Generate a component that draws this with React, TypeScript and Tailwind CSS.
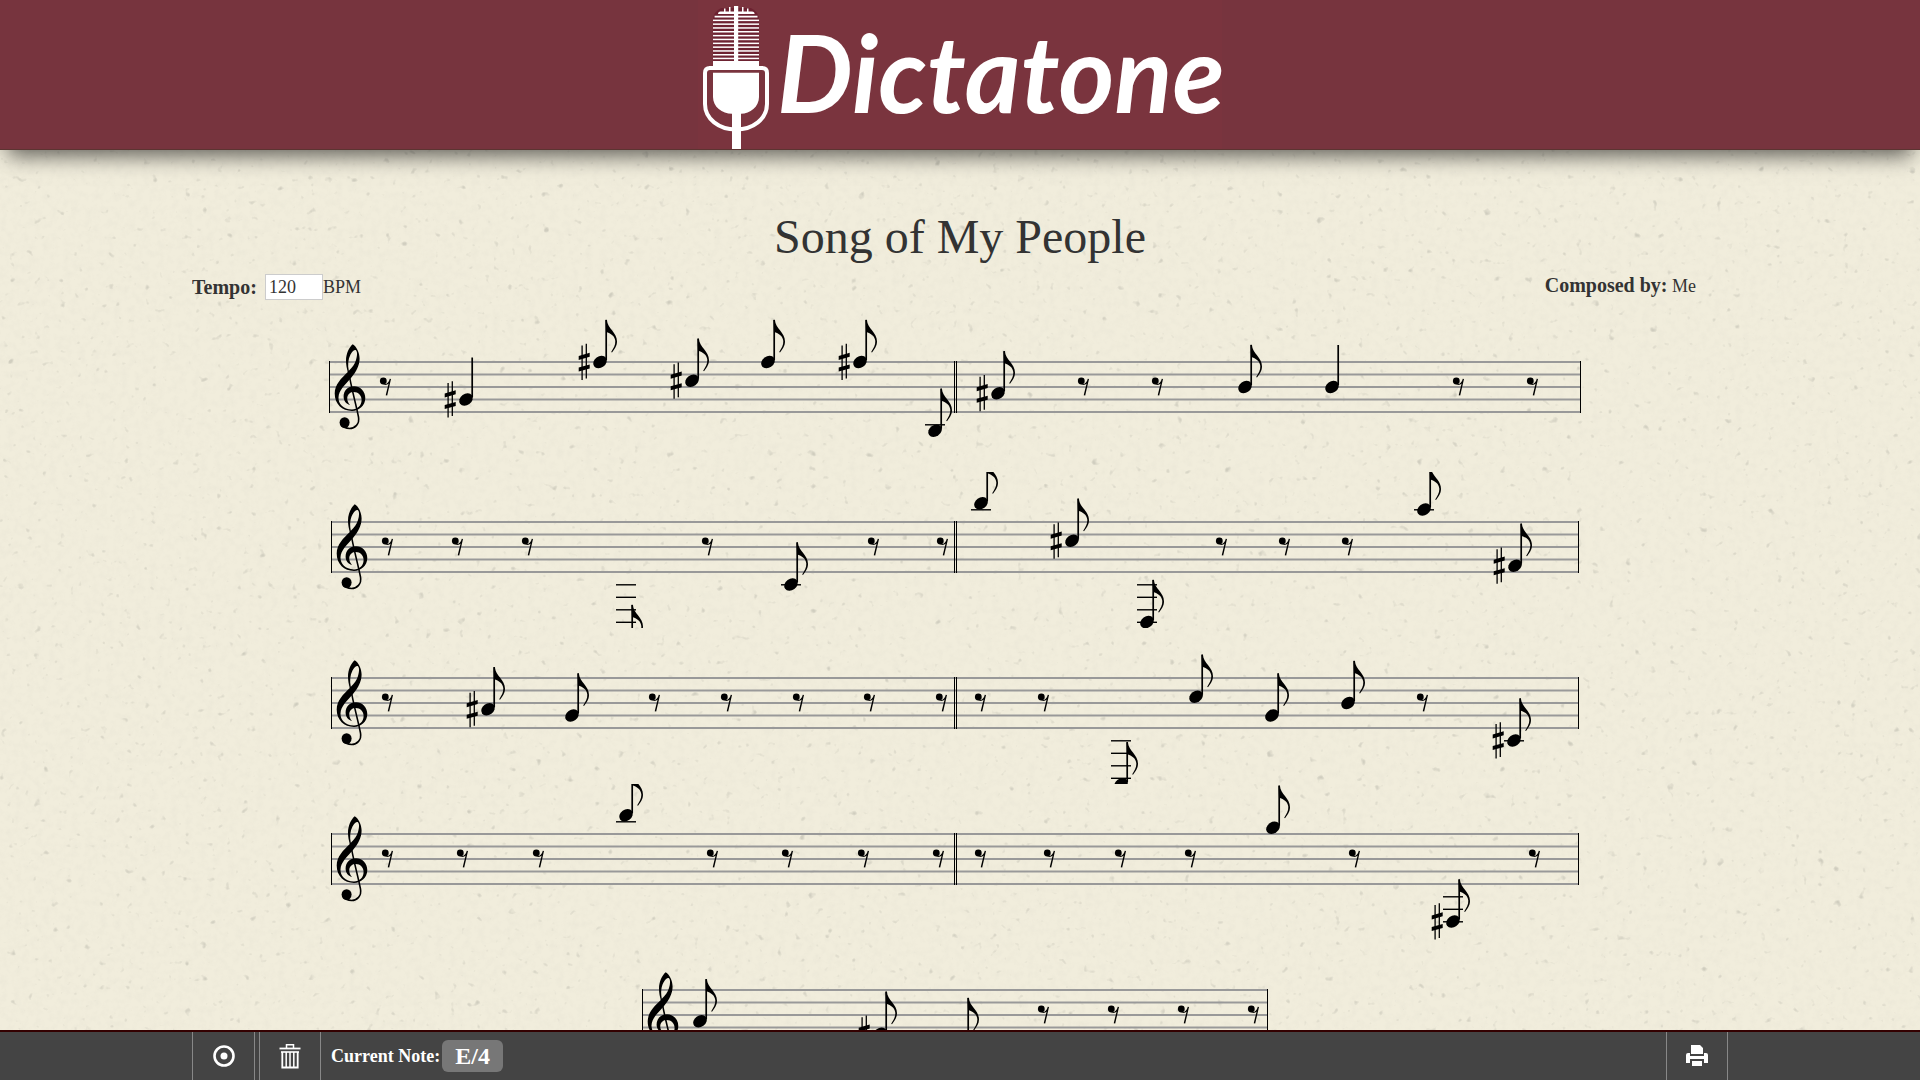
import React from "react";

type NoteItem = { kind: "note"; x: number; step: number; sharp?: boolean; quarter?: boolean };
type RestItem = { kind: "rest"; x: number };
type Item = NoteItem | RestItem;
type Measure = { clef?: boolean; items: Item[] };

const r = (x: number): RestItem => ({ kind: "rest", x });
const n = (x: number, step: number): NoteItem => ({ kind: "note", x, step });
const s = (x: number, step: number): NoteItem => ({ kind: "note", x, step, sharp: true });

const ROWS: { wide?: boolean; measures: Measure[] }[] = [
  {
    wide: true,
    measures: [
      {
        clef: true,
        items: [r(51), { ...s(137, 6), quarter: true }, s(271, 0), s(363, 3), n(439, 0), s(531, 0), n(606, 11)],
      },
      { items: [s(43, 5), r(123), r(197), n(290, 4), { ...n(377, 4), quarter: true }, r(498), r(572)] },
    ],
  },
  {
    measures: [
      { clef: true, items: [r(51), r(121), r(191), n(295, 20), r(371), n(460, 10), r(537), r(606)] },
      { items: [n(26, -3), s(117, 3), n(192, 16), r(261), r(324), r(387), n(469, -2), s(560, 7)] },
    ],
  },
  {
    measures: [
      { clef: true, items: [r(51), s(157, 5), n(241, 6), r(318), r(390), r(462), r(533), r(605)] },
      { items: [r(20), r(83), n(166, 17), n(241, 3), n(317, 6), n(393, 4), r(462), s(559, 10)] },
    ],
  },
  {
    measures: [
      { clef: true, items: [r(51), r(126), r(202), n(295, -3), r(376), r(451), r(527), r(602)] },
      { items: [r(20), r(89), r(160), r(230), n(318, -1), r(394), s(498, 14), r(574)] },
    ],
  },
  { wide: true, measures: [{ clef: true, items: [n(58, 5), s(238, 7), n(320, 8), r(396), r(466), r(536), r(606)] }] },
];

const TOP = 50;
const STEP = 6.25;

function Clef() {
  return (
    <g>
      <path
        fillRule="evenodd"
        d="M23 48.9C30 48.9 36.3 43.5 36.3 36C36.3 29 31 24.3 25 24.3C18.5 24.3 14.6 29 14.6 34.5C14.6 38.5 17 42 21 43C18.8 40.5 18 38 18.3 35.5C18.7 32 21.5 30 24.8 30C29.2 30 32.6 33.5 32.6 38C32.6 43.5 28.5 47.4 23 47.4C14 47.4 9.3 41.5 9.5 35.5C9.8 28 16 23 22 16C27.5 9.5 30.6 3 30.6 -3.5C30.6 -9.5 27.5 -15.5 23.7 -17.7C20 -14.5 17 -8 17 -1.5C17 2.5 17.8 6.5 18.8 10C12.5 16 5.7 22.5 5.7 31.5C5.7 42 13 48.9 23 48.9ZM19.8 8.8C18.6 3 19 -3 21.5 -7.5C23 -10.5 25 -12.3 26.7 -12C28.7 -10.5 28.2 -6 27 -2C25.8 2 23.3 5.5 19.8 8.8Z"
      />
      <path d="M19.5 9C22 25 27 42 29.5 55C30.8 62 26 66.5 20.5 66.5C17 66.5 14 64.5 12.5 62" fill="none" stroke="black" strokeWidth="1.6" />
      <ellipse cx="15.6" cy="60.6" rx="5" ry="5.4" />
    </g>
  );
}

function Rest({ x }: { x: number }) {
  return (
    <g transform={`translate(${x} 15.5)`}>
      <circle cx="3.3" cy="3.5" r="3.4" />
      <path d="M3 6.7C6.500 7.200 9 5 9.8 1.200L11 1.400L7.200 18L5.700 17.800L8.600 6C7.500 7.400 5 7.900 3 6.700Z" />
    </g>
  );
}

function Note({ note }: { note: NoteItem }) {
  const ledgers: number[] = [];
  for (let k = 10; k <= note.step; k += 2) ledgers.push(k);
  for (let k = -2; k >= note.step; k -= 2) ledgers.push(k);
  return (
    <g>
      {ledgers.map((k) => (
        <path key={k} d={`M${note.x - 10} ${k * STEP + 0.3}h20`} stroke="black" strokeWidth="1.4" />
      ))}
      <g transform={`translate(${note.x} ${note.step * STEP})`}>
        <ellipse rx="7.3" ry="5.7" transform="rotate(-36)" />
        <path d="M6.2 -2V-42" stroke="black" strokeWidth="1.7" />
        {!note.quarter && (
          <path d="M5.5 -42.3H6.8C7.600 -33 17 -30 17 -20.500C17 -16 14.400 -13 12 -9.500L11.200 -10C13.400 -13.600 15.600 -17 15.300 -21C14.800 -26 11 -28.500 6 -30Z" />
        )}
        {note.sharp && (
          <g>
            <path d="M-17.9 -16.6V18M-13.7 -18.2V16.4" stroke="black" strokeWidth="1.3" />
            <path d="M-21.3 -6L-10.3 -9.2V-5.2L-21.3 -2ZM-21.3 5.600L-10.300 2.400V6.400L-21.300 9.600Z" />
          </g>
        )}
      </g>
    </g>
  );
}

function Stave({ measure, wide }: { measure: Measure; wide?: boolean }) {
  const w = wide ? 626 : 624;
  const h = wide ? 160 : 156;
  return (
    <svg width={w} height={h} viewBox={`0 ${-TOP} ${w} ${h}`} className="block shrink-0" role="img" aria-label="Measure">
      {[0, 1, 2, 3, 4].map((k) => (
        <rect key={k} x="0" y={k * 12.5 - 1} width={w} height="2" fill="#999999" />
      ))}
      <rect x={measure.clef ? 0 : 1} y="-1" width="1" height="52" />
      <rect x={w - 1} y="-1" width="1" height="52" />
      {measure.clef && <Clef />}
      {measure.items.map((item, i) => (item.kind === "rest" ? <Rest key={i} x={item.x} /> : <Note key={i} note={item} />))}
    </svg>
  );
}

function Microphone() {
  return (
    <svg width="66" height="149" viewBox="0 0 66 149" fill="white" aria-hidden="true">
      <path d="M10 62V20Q10 12 18 8H48Q56 12 56 20V62Z" fill="#621426" opacity="0.55" />
      <path d="M15 14Q15 11.5 17.5 11.5H49Q51.600 11.500 51.600 14Z" />
      <path d="M11.600 15.800H54.500V17.400H11.600Z" />
      {[20.3, 24.1, 27.9, 31.7, 35.6, 39.4, 43.3, 47.1, 50.9, 54.7, 58.4].map((y) => (
        <rect key={y} x="10" y={y - 0.7} width="46" height="1.5" />
      ))}
      <path d="M21 8.500h1.500V12H21ZM26 7h1.500v5H26ZM39 7h1.500v5H39ZM44 8.500h1.500V12H44Z" />
      <rect x="31" y="6" width="4.200" height="56" />
      <rect x="10" y="61" width="46" height="6" />
      <path d="M6 66H60V70H6Z" />
      <path d="M2 73Q2 68 7 68H59Q64 68 64 73V104C64 119 50 129.500 33 129.500C16 129.500 2 119 2 104Z" fill="none" stroke="white" strokeWidth="4" />
      <path d="M10 72.700H56V97C56 107 47 113.700 38 113.700V149H29V113.700C19 113.700 10 107 10 97Z" />
    </svg>
  );
}

function Paper() {
  return (
    <svg className="absolute inset-0 -z-10 h-full w-full" aria-hidden="true">
      <filter id="fibres" x="0" y="0" width="100%" height="100%">
        <feTurbulence type="fractalNoise" baseFrequency="0.14" numOctaves="3" seed="4" />
        <feColorMatrix values="0 0 0 0 0.66  0 0 0 0 0.64  0 0 0 0 0.56  0 0 0 0.9 -0.36" />
      </filter>
      <filter id="specks" x="0" y="0" width="100%" height="100%">
        <feTurbulence type="fractalNoise" baseFrequency="0.12" numOctaves="2" seed="11" />
        <feColorMatrix values="0 0 0 0 0.5  0 0 0 0 0.49  0 0 0 0 0.42  5 0 0 0 -3.5" />
      </filter>
      <rect width="100%" height="100%" filter="url(#fibres)" opacity="0.35" />
      <rect width="100%" height="100%" filter="url(#specks)" opacity="0.6" />
    </svg>
  );
}

export default function App() {
  return (
    <div className="relative isolate flex h-screen flex-col overflow-hidden bg-[#f1eddc] font-['Liberation_Serif',serif] text-[#333333]">
      <Paper />
      <header className="relative z-10 flex justify-center border-b border-[#5c3431] bg-[#77343e] shadow-[0_14px_20px_-8px_rgba(0,0,0,0.6)]">
        <a href="#home" className="flex items-start bg-[#7a343e] px-[5px] text-white">
          <Microphone />
          <span className="w-[448px] pl-2 pt-3 font-['Lato',sans-serif] text-[107px] leading-[120px] font-bold italic">Dictatone</span>
        </a>
      </header>

      <main className="mx-auto min-h-0 w-4/5 flex-1 overflow-hidden">
        <h1 className="mt-[60px] text-center text-[48px] leading-[54px]">Song of My People</h1>
        <div className="mt-2 flex h-[40px] items-start justify-between pr-8 text-[18px] leading-[26px]">
          <div className="flex items-center pt-0.5">
            <label htmlFor="tempo" className="w-[73px] text-[20px] font-bold">Tempo:</label>
            <input id="tempo" defaultValue="120" className="h-[26px] w-[58px] border border-[#cccccc] bg-white px-[3px]" />
            <span>BPM</span>
          </div>
          <p><b className="text-[20px]">Composed by:</b> Me</p>
        </div>
        <div className="pr-2.5">
          {ROWS.map((row, i) => (
            <div key={i} className="flex justify-center">
              {row.measures.map((m, j) => (
                <Stave key={j} measure={m} wide={row.wide} />
              ))}
            </div>
          ))}
        </div>
      </main>

      <footer className="border-t-2 border-[#330000] bg-[#444444] text-white">
        <div className="mx-auto flex h-12 w-4/5 items-stretch">
          <button aria-label="Record" className="flex w-[63px] items-center justify-center border-x border-[#888888]">
            <svg width="22" height="22" viewBox="0 0 22 22">
              <circle cx="11" cy="11" r="9.500" fill="none" stroke="white" strokeWidth="2.600" />
              <circle cx="11" cy="11" r="3.500" fill="white" />
            </svg>
          </button>
          <button aria-label="Delete" className="ml-1 flex w-[62px] items-center justify-center border-x border-[#888888]">
            <svg width="22" height="26" viewBox="0 0 22 26" fill="none" stroke="white">
              <path d="M0.500 5.500H21.500" strokeWidth="1.800" />
              <path d="M7.500 5V1.800H14.500V5" strokeWidth="1.500" />
              <path d="M2 9H20" strokeWidth="1.600" />
              <path d="M3.300 9V24.500H18.700V9" strokeWidth="1.800" />
              <path d="M7.200 9V24M11 9V24M14.800 9V24" strokeWidth="1.500" />
            </svg>
          </button>
          <div className="flex items-center gap-0.5 pl-2.5">
            <span className="text-[18px] font-bold">Current Note:</span>
            <span className="flex h-8 w-[61px] items-center justify-center rounded-md bg-[#777777] text-[24px] font-bold">E/4</span>
          </div>
          <button aria-label="Print" className="ml-auto flex w-[62px] items-center justify-center border-x border-[#888888]">
            <svg width="24" height="24" viewBox="0 0 24 24" fill="white">
              <path d="M6 1H15L18 4V10H6ZM3 9H5V12H19V9H21Q23 9 23 11V19H19V15H5V19H1V11Q1 9 3 9ZM7 17H17V22H7Z" />
            </svg>
          </button>
        </div>
      </footer>
    </div>
  );
}
